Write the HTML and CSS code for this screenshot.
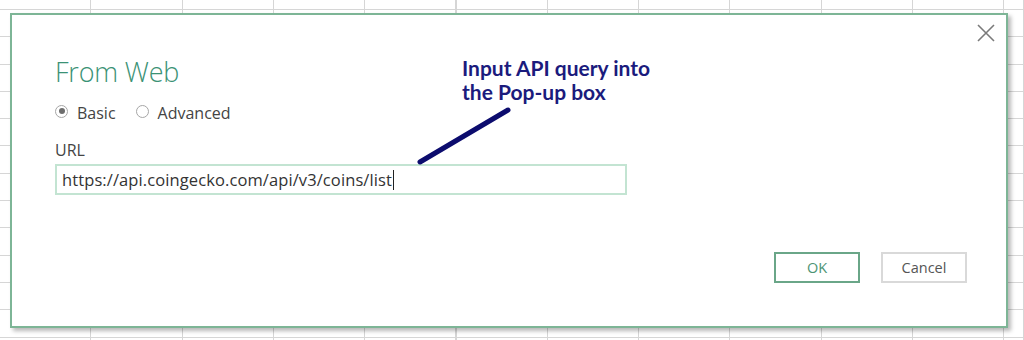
FILE: index.html
```html
<!DOCTYPE html>
<html lang="en">

<head>
  <meta charset="UTF-8">
  <meta name="viewport" content="width=device-width, initial-scale=1.0">
  <title>From Web</title>
  <link rel="stylesheet" href="styles.css">
</head>

<body>
  <div class="sheet">
    <div class="dialog">
      <button class="close" aria-label="Close">
        <svg width="18" height="18" viewBox="0 0 18 18">
          <path d="M1 1 L17 17 M17 1 L1 17" stroke="#7a7a7a" stroke-width="1.6" fill="none" />
        </svg>
      </button>

      <h1 class="title">From Web</h1>

      <div class="modes">
        <label class="radio checked"><span class="dot"></span>Basic</label>
        <label class="radio"><span class="dot"></span>Advanced</label>
      </div>

      <div class="field">
        <div class="label">URL</div>
        <div class="input">https://api.coingecko.com/api/v3/coins/list<span class="caret"></span></div>
      </div>

      <div class="actions">
        <button class="btn primary">OK</button>
        <button class="btn">Cancel</button>
      </div>

      <!-- annotation drawn over the dialog -->
      <div class="note">Input API query into<br>the Pop-up box</div>
      <svg class="pointer" width="110" height="70" viewBox="0 0 110 70">
        <line x1="8" y1="60" x2="96" y2="8" stroke="#0c0c6e" stroke-width="5" stroke-linecap="round" />
      </svg>
    </div>
  </div>
</body>

</html>
```

FILE: styles.css
```css
html,
body {
  margin: 0;
  height: 100%;
}

body {
  background-color: #fff;
  background-image:
    repeating-linear-gradient(to right, #d6d6d6 0, #d6d6d6 1px, transparent 1px, transparent 91.3px),
    repeating-linear-gradient(to bottom, #d6d6d6 0, #d6d6d6 1px, transparent 1px, transparent 27.3px);
  background-position: -1px 9px, 0 9px;
  font-family: "Open Sans", "Noto Sans", sans-serif;
  overflow: hidden;
}

.sheet {
  padding: 13px 0 0 10px;
}

.dialog {
  position: relative;
  box-sizing: border-box;
  width: 998px;
  height: 315px;
  background: #fff;
  border: 2px solid #7db596;
  box-shadow: 3px 3px 4px rgba(0, 0, 0, 0.28);
  padding: 41px 0 0 43px;
  display: flex;
  flex-direction: column;
}

.close {
  position: absolute;
  top: 9px;
  right: 11px;
  border: 0;
  background: none;
  padding: 0;
  width: 18px;
  height: 18px;
}

.title {
  margin: 0;
  font-weight: 300;
  font-size: 27px;
  line-height: 32px;
  color: #3b9275;
  letter-spacing: -0.2px;
}

.modes {
  display: flex;
  gap: 20px;
  margin-top: 14px;
  font-size: 16px;
  color: #444;
}

.radio {
  display: flex;
  align-items: center;
  gap: 9px;
  line-height: 22px;
}

.dot {
  box-sizing: border-box;
  width: 13px;
  height: 13px;
  border: 1px solid #a6a6a6;
  border-radius: 50%;
  margin-top: -4px;
  position: relative;
}

.checked .dot::after {
  content: "";
  position: absolute;
  top: 2.5px;
  left: 2.5px;
  width: 6px;
  height: 6px;
  border-radius: 50%;
  background: #6d6d6d;
}

.field {
  margin-top: 16px;
}

.label {
  font-size: 16px;
  color: #444;
  line-height: 21px;
}

.input {
  box-sizing: border-box;
  width: 572px;
  height: 31px;
  margin-top: 3px;
  border: 2px solid #c3e4d2;
  padding: 0 0 0 5px;
  font-size: 16.5px;
  line-height: 27px;
  color: #333;
  letter-spacing: 0.1px;
  display: flex;
  align-items: center;
}

.caret {
  display: inline-block;
  width: 1px;
  height: 20px;
  background: #222;
  margin-left: 1px;
}

.actions {
  display: flex;
  justify-content: flex-end;
  gap: 21px;
  margin-top: 57px;
  padding-right: 39px;
}

.btn {
  box-sizing: border-box;
  width: 86px;
  height: 31px;
  background: #fff;
  border: 2px solid #d9d9d9;
  font-family: "Open Sans", "Noto Sans", sans-serif;
  font-size: 14.5px;
  color: #555;
  padding: 0;
}

.btn.primary {
  border-color: #6aa688;
  color: #4d9474;
}

.note {
  position: absolute;
  top: 41px;
  left: 450px;
  font-family: Lato, "Open Sans", sans-serif;
  font-weight: 700;
  font-size: 21px;
  line-height: 24px;
  color: #1b1b7d;
}

.pointer {
  position: absolute;
  top: 87px;
  left: 400px;
}
```
